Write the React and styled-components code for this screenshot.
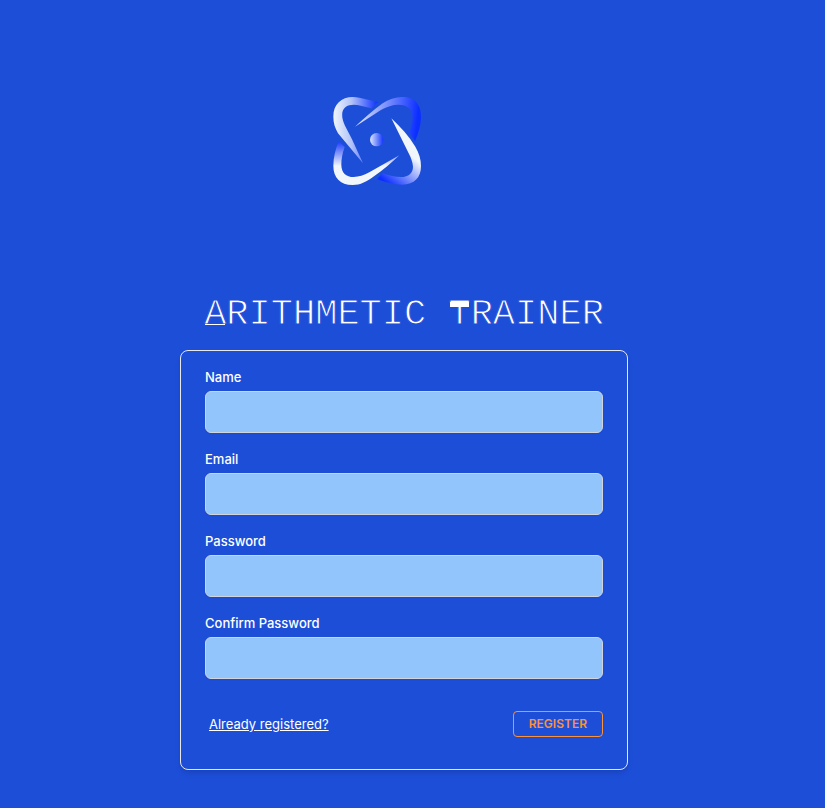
import React from "react";
import styled, { createGlobalStyle } from "styled-components";

const GlobalStyle = createGlobalStyle`
  *, *::before, *::after { box-sizing: border-box; }
  body {
    margin: 0;
    background: #1d4ed8;
    color: #fff;
    font-family: Inter, "Open Sans", sans-serif;
  }
`;

const Page = styled.main`
  min-height: 100vh;
  padding: 96px 17px 38px 0;
  display: flex;
  flex-direction: column;
  align-items: center;
`;

const LogoLink = styled.a`
  display: block;
  margin-right: 54px;
  line-height: 0;
`;

const Title = styled.h1`
  margin: 108px 0 16px;
  font: 400 37px/40px "Liberation Mono", monospace;
  text-transform: uppercase;
  white-space: nowrap;
  -webkit-text-stroke: 1px #1d4ed8;
`;

const Triangle = styled.span`
  position: relative;
  &::after {
    content: "";
    position: absolute;
    left: 1px;
    right: 1px;
    bottom: 10px;
    height: 1px;
    background: #fff;
  }
`;

const HeavyTop = styled.span`
  position: relative;
  &::after {
    content: "";
    position: absolute;
    left: 2px;
    right: 2px;
    top: 9px;
    height: 5px;
    background: #fff;
  }
`;

const Card = styled.form`
  width: 100%;
  max-width: 448px;
  padding: 16px 24px 32px;
  border: 1px solid #e5e7eb;
  border-radius: 8px;
  box-shadow: 0 4px 6px -1px rgba(0, 0, 0, 0.1), 0 2px 4px -2px rgba(0, 0, 0, 0.1);
`;

const Field = styled.div`
  & + & { margin-top: 16px; }
`;

const Label = styled.label`
  display: block;
  margin-bottom: 4px;
  font-size: 13px;
  font-weight: 500;
  line-height: 20px;
`;

const Input = styled.input`
  display: block;
  width: 100%;
  height: 42px;
  padding: 8px 12px;
  border: 1px solid #d1d5db;
  border-radius: 6px;
  background: #93c5fd;
  color: #111827;
  font: inherit;
  box-shadow: 0 1px 2px rgba(0, 0, 0, 0.05);
`;

const Actions = styled.div`
  display: flex;
  align-items: center;
  justify-content: space-between;
  margin-top: 32px;
  padding-left: 4px;
`;

const TextLink = styled.a`
  color: #fff;
  font-size: 13px;
  line-height: 20px;
  text-decoration: underline;
`;

const Button = styled.button`
  padding: 4px 15px;
  border: 1px solid #fb923c;
  border-radius: 4px;
  background: transparent;
  color: #fb923c;
  font: 600 12px/16px Inter, sans-serif;
  text-transform: uppercase;
  cursor: pointer;
`;

const fields = [
  { id: "name", label: "Name", type: "text" },
  { id: "email", label: "Email", type: "email" },
  { id: "password", label: "Password", type: "password" },
  { id: "password_confirmation", label: "Confirm Password", type: "password" },
];

function Logo() {
  return (
    <svg width="90" height="90" viewBox="30 30 270 270" aria-hidden="true">
      <defs>
        <linearGradient id="a" gradientUnits="userSpaceOnUse" x1="35" y1="90" x2="168" y2="90">
          <stop offset="0" stopColor="#eef4fb" />
          <stop offset="0.4" stopColor="#b3c3f8" />
          <stop offset="1" stopColor="#0c2fff" />
        </linearGradient>
        <linearGradient id="b" gradientUnits="userSpaceOnUse" x1="99" y1="90" x2="285" y2="110">
          <stop offset="0" stopColor="#e4ecfb" />
          <stop offset="1" stopColor="#0c2fff" />
        </linearGradient>
        <linearGradient id="c" gradientUnits="userSpaceOnUse" x1="275" y1="215" x2="205" y2="300">
          <stop offset="0" stopColor="#f1f6fb" />
          <stop offset="1" stopColor="#0c2fff" />
        </linearGradient>
        <linearGradient id="d" gradientUnits="userSpaceOnUse" x1="50" y1="240" x2="50" y2="168">
          <stop offset="0" stopColor="#f1f6fb" />
          <stop offset="1" stopColor="#2040ff" />
        </linearGradient>
        <linearGradient id="e" gradientUnits="userSpaceOnUse" x1="144" y1="161" x2="184" y2="161">
          <stop offset="0" stopColor="#dbe5fa" />
          <stop offset="1" stopColor="#1236ff" />
        </linearGradient>
      </defs>
      <path fill="url(#a)" d="M168 48 L112 35 C67 26 34 48 34 92 C34 112 39 125 48 142 L123 232 L90 160 L69 119 C58 95 57 75 70 64 C81 55 99 55 116 59 L148 67 Z" />
      <path fill="url(#b)" d="M99 122 C128 95 154 72 180 53 C205 36 231 30 254 34 C286 40 298 64 297 97 C296 121 289 143 279 166 L262 140 C270 119 274 101 271 84 C268 66 251 56 229 56 C211 56 195 62 178 71 Z" />
      <path fill="url(#c)" d="M208 97 C236 123 261 151 280 182 C291 201 297 219 297 240 C297 275 277 295 241 296 C218 296 190 289 165 280 L181 262 C202 269 219 273 237 273 C260 273 273 261 273 242 C272 229 267 215 260 202 Z" />
      <path fill="url(#d)" d="M232 208 C207 232 182 253 157 270 C135 287 115 297 92 297 C54 297 34 274 34 239 C34 215 41 189 50 165 L68 183 C61 203 58 220 58 236 C58 260 72 273 95 273 C111 273 125 268 142 259 Z" />
      <circle cx="164" cy="161" r="20" fill="url(#e)" />
    </svg>
  );
}

export default function App() {
  return (
    <>
      <GlobalStyle />
      <Page>
        <LogoLink href="/" aria-label="Home"><Logo /></LogoLink>
        <Title>
          <Triangle>A</Triangle>rithmetic <HeavyTop>T</HeavyTop>rainer
        </Title>
        <Card onSubmit={(event) => event.preventDefault()}>
          {fields.map(({ id, label, type }) => (
            <Field key={id}>
              <Label htmlFor={id}>{label}</Label>
              <Input id={id} name={id} type={type} />
            </Field>
          ))}
          <Actions>
            <TextLink href="/login">Already registered?</TextLink>
            <Button type="submit">Register</Button>
          </Actions>
        </Card>
      </Page>
    </>
  );
}
